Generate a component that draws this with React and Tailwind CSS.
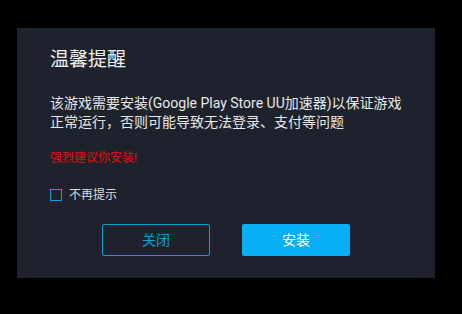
export default function App() {
  return (
    <div
      className="w-[462px] h-[314px] bg-black pt-[28px] pl-[17px]"
      style={{ fontFamily: 'Roboto, "Noto Sans CJK SC", sans-serif' }}
    >
      <div className="w-[418px] h-[250px] bg-[#1e222c] pt-[20px] pl-[33px] pr-[30px] flex flex-col">
        <h1 className="text-[19px] leading-[24px] text-[#f0f0f0]">温馨提醒</h1>

        <p className="mt-[22px] text-[14px] leading-[19px] text-[#e8e8e8]">
          该游戏需要安装(Google Play Store UU加速器)以保证游戏正常运行，否则可能导致无法登录、支付等问题
        </p>

        <p className="mt-[18px] text-[12px] leading-[16px] text-[#e0100f]">强烈建议你安装!</p>

        <label className="mt-[21px] flex items-center gap-[7px] h-[16px]">
          <span className="w-[12px] h-[12px] border border-[#0a9fde] shrink-0" />
          <span className="text-[12px] leading-[16px] text-[#dcdcdc]">不再提示</span>
        </label>

        <div className="mt-[21px] flex justify-center gap-[32px] -ml-[33px] -mr-[30px]">
          <button className="w-[108px] h-[32px] rounded-[2px] border border-[#0a9fde] text-[#0a9fde] text-[14px]">
            关闭
          </button>
          <button className="w-[108px] h-[32px] rounded-[2px] bg-[#08aff5] text-white text-[14px]">
            安装
          </button>
        </div>
      </div>
    </div>
  );
}
